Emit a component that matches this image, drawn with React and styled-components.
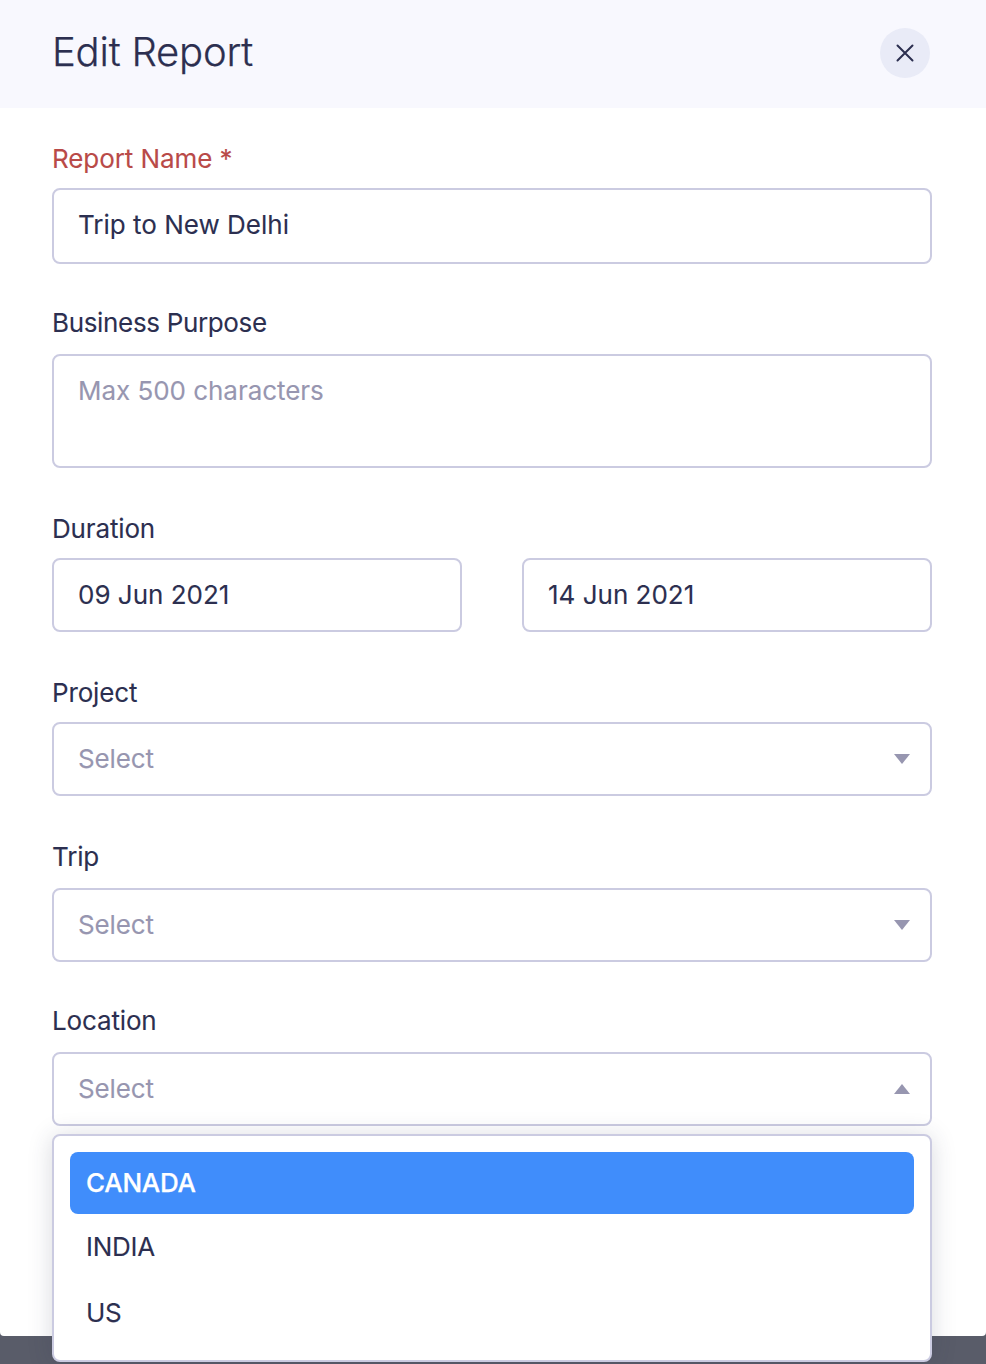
import React from 'react'
import styled, { createGlobalStyle } from 'styled-components'

const textColor = '#2c2f50'
const mutedColor = '#9796b0'
const borderColor = '#cbcbe1'

const GlobalStyle = createGlobalStyle`
  * {
    box-sizing: border-box;
  }
  body {
    margin: 0;
    background: #595c69;
    color: ${textColor};
    font-family: Inter, 'Liberation Sans', sans-serif;
    font-size: 26px;
    -webkit-text-stroke: 0.1px currentColor;
    overflow: hidden;
  }
`

const Page = styled.div`
  height: 1364px;
  overflow: hidden;
`

const Modal = styled.div`
  height: 1336px;
  background: #fff;
  border-radius: 0 0 4px 4px;
`

const Header = styled.header`
  display: flex;
  align-items: center;
  justify-content: space-between;
  height: 108px;
  padding: 0 56px 2px 52px;
  background: #f8f8fe;
`

const Title = styled.h1`
  margin: 0;
  padding-bottom: 2px;
  font-size: 40px;
  font-weight: 300;
  line-height: 48px;
  letter-spacing: -0.2px;
  -webkit-text-stroke-width: 0.25px;
`

const CloseButton = styled.button`
  display: flex;
  align-items: center;
  justify-content: center;
  width: 50px;
  height: 50px;
  padding: 0;
  border: 0;
  border-radius: 50%;
  background: #e9ebf7;
`

const Form = styled.form`
  padding: 34px 54px 0 52px;
`

const Field = styled.div`
  position: relative;
  height: ${({ $height }) => $height}px;
`

const Label = styled.label`
  display: block;
  height: ${({ $height }) => $height || 46}px;
  line-height: 34px;
  letter-spacing: ${({ $spacing }) => $spacing || -0.15}px;
  color: ${({ $required }) => ($required ? '#b94a48' : textColor)};
`

const Control = styled.div`
  display: flex;
  flex: 1;
  align-items: ${({ $multiline }) => ($multiline ? 'flex-start' : 'center')};
  justify-content: space-between;
  height: ${({ $height }) => $height || 74}px;
  padding: ${({ $multiline, $height }) => ($multiline ? '18px 20px 0 24px' : `0 20px ${$height ? 2 : 0}px 24px`)};
  border: 2px solid ${borderColor};
  border-radius: 8px;
  background: #fff;
  line-height: 34px;
  letter-spacing: ${({ $spacing }) => $spacing || 0}px;
  color: ${({ $placeholder }) => ($placeholder ? mutedColor : textColor)};
`

const DateRow = styled.div`
  display: flex;
  gap: 60px;
`

const Menu = styled.ul`
  position: absolute;
  top: 130px;
  left: 0;
  right: 0;
  height: 228px;
  margin: 0;
  padding: 16px;
  border: 2px solid ${borderColor};
  border-radius: 8px;
  background: #fff;
  box-shadow: 0 2px 24px rgba(44, 48, 77, 0.18);
  list-style: none;
`

const Option = styled.li`
  height: 62px;
  margin-bottom: ${({ $active }) => ($active ? 2 : 4)}px;
  padding: 0 16px;
  border-radius: 8px;
  line-height: 62px;
  letter-spacing: -0.25px;
  font-weight: ${({ $active }) => ($active ? 500 : 400)};
  -webkit-text-stroke-width: ${({ $active }) => ($active ? 0.25 : 0.1)}px;
  color: ${({ $active }) => ($active ? '#fff' : textColor)};
  background: ${({ $active }) => ($active ? '#408dfb' : 'transparent')};
`

const CloseIcon = () => (
  <svg width='18' height='18' viewBox='0 0 18 18' fill='none' stroke={textColor} strokeWidth='2' strokeLinecap='round'>
    <path d='M1.5 1.5L16.5 16.5M16.5 1.5L1.5 16.5' />
  </svg>
)

const Arrow = ({ up }) => (
  <svg width='16' height='10' viewBox='0 0 16 10' fill={mutedColor}>
    <path d={up ? 'M0 10L8 0L16 10Z' : 'M0 0H16L8 10Z'} />
  </svg>
)

const Select = ({ label, height, labelHeight, open, children }) => (
  <Field $height={height}>
    <Label $height={labelHeight}>{label}</Label>
    <Control $placeholder $spacing={-0.15}>
      Select
      <Arrow up={open} />
    </Control>
    {open && children}
  </Field>
)

const locations = ['CANADA', 'INDIA', 'US']

const App = () => (
  <Page>
    <GlobalStyle />
    <Modal>
      <Header>
        <Title>Edit Report</Title>
        <CloseButton aria-label='Close'>
          <CloseIcon />
        </CloseButton>
      </Header>
      <Form>
        <Field $height={164}>
          <Label $required $spacing={-0.08}>Report Name *</Label>
          <Control $height={76}>Trip to New Delhi</Control>
        </Field>
        <Field $height={206}>
          <Label $height={48} $spacing={-0.34}>Business Purpose</Label>
          <Control $height={114} $spacing={-0.04} $placeholder $multiline>Max 500 characters</Control>
        </Field>
        <Field $height={164}>
          <Label>Duration</Label>
          <DateRow>
            <Control>09 Jun 2021</Control>
            <Control>14 Jun 2021</Control>
          </DateRow>
        </Field>
        <Select label='Project' height={164} />
        <Select label='Trip' height={164} labelHeight={48} />
        <Select label='Location' height={122} labelHeight={48} open>
          <Menu>
            {locations.map((name, i) => (
              <Option key={name} $active={i === 0}>{name}</Option>
            ))}
          </Menu>
        </Select>
      </Form>
    </Modal>
  </Page>
)

export default App
